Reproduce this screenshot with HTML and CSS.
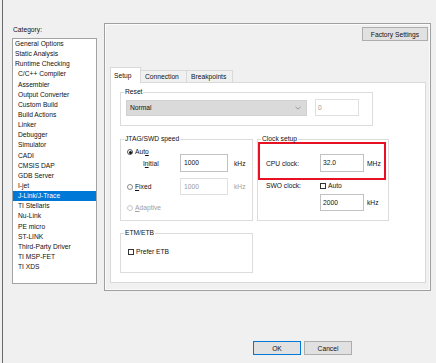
FILE: index.html
```html
<!DOCTYPE html>
<html lang="en">
<head>
    <meta charset="UTF-8">
    <title>Options for node</title>
    <link rel="stylesheet" href="styles.css">
</head>
<body>
    <div class="window">
        <aside class="sidebar">
            <div class="caption">Category:</div>
            <ul class="category-list">
                <li>General Options</li>
                <li>Static Analysis</li>
                <li>Runtime Checking</li>
                <li class="sub">C/C++ Compiler</li>
                <li class="sub">Assembler</li>
                <li class="sub">Output Converter</li>
                <li class="sub">Custom Build</li>
                <li class="sub">Build Actions</li>
                <li class="sub">Linker</li>
                <li class="sub">Debugger</li>
                <li class="sub">Simulator</li>
                <li class="sub">CADI</li>
                <li class="sub">CMSIS DAP</li>
                <li class="sub">GDB Server</li>
                <li class="sub">I-jet</li>
                <li class="sub selected">J-Link/J-Trace</li>
                <li class="sub">TI Stellaris</li>
                <li class="sub">Nu-Link</li>
                <li class="sub">PE micro</li>
                <li class="sub">ST-LINK</li>
                <li class="sub">Third-Party Driver</li>
                <li class="sub">TI MSP-FET</li>
                <li class="sub">TI XDS</li>
            </ul>
        </aside>

        <main class="options">
            <section class="panel">
                <div class="panel-top">
                    <button class="btn factory">Factory Settings</button>
                </div>
                <div class="tabs">
                    <span class="tab active">Setup</span>
                    <span class="tab tab-connection">Connection</span>
                    <span class="tab tab-breakpoints">Breakpoints</span>
                </div>
                <div class="tab-page">
                    <fieldset class="group reset-group">
                        <legend>Reset</legend>
                        <div class="reset-row">
                            <div class="combo">
                                <span>Normal</span>
                                <svg width="6" height="4" viewBox="0 0 6 4"><polyline points="0.5,0.8 3,3.2 5.5,0.8" fill="none" stroke="#8a8a8a" stroke-width="0.8"/></svg>
                            </div>
                            <div class="field disabled">0</div>
                        </div>
                    </fieldset>

                    <div class="groups">
                        <fieldset class="group jtag-group">
                            <legend>JTAG/SWD speed</legend>
                            <div class="group-body jtag-body">
                                <div class="opt auto-row"><span class="radio checked"></span><span>Aut<u>o</u></span></div>
                                <div class="speed-row">
                                    <span class="indent">I<u>n</u>itial</span>
                                    <div class="field">1000</div>
                                    <span>kHz</span>
                                </div>
                                <div class="speed-row fixed-row">
                                    <span class="opt"><span class="radio"></span><span><u>F</u>ixed</span></span>
                                    <div class="field disabled">1000</div>
                                    <span class="muted">kHz</span>
                                </div>
                                <div class="opt adaptive-row muted"><span class="radio faded"></span><span><u>A</u>daptive</span></div>
                            </div>
                        </fieldset>

                        <fieldset class="group clock-group">
                            <legend>Clock setup</legend>
                            <div class="highlight">
                                <div class="clock-row">
                                    <span>CPU clock:</span>
                                    <div class="field">32.0</div>
                                    <span>MHz</span>
                                </div>
                            </div>
                            <div class="clock-row swo-row">
                                <span>SWO clock:</span>
                                <span class="opt"><span class="check"></span><span>Auto</span></span>
                            </div>
                            <div class="clock-row swo-value">
                                <span></span>
                                <div class="field">2000</div>
                                <span>kHz</span>
                            </div>
                        </fieldset>

                        <fieldset class="group etm-group">
                            <legend>ETM/ETB</legend>
                            <div class="group-body etm-body">
                                <div class="opt"><span class="check"></span><span>Prefer ETB</span></div>
                            </div>
                        </fieldset>
                    </div>
                </div>
            </section>

            <div class="actions">
                <button class="btn default">OK</button>
                <button class="btn">Cancel</button>
            </div>
        </main>
    </div>
</body>
</html>
```

FILE: styles.css
```css
* {
    box-sizing: border-box;
}
body {
    margin: 0;
    width: 436px;
    height: 363px;
    overflow: hidden;
    background: #f0f0f0;
    font-family: "Liberation Sans", Arial, sans-serif;
    font-size: 6.7px;
    color: #111;
}
.window {
    display: grid;
    grid-template-columns: 85px 327px;
    column-gap: 7px;
    height: 363px;
    margin-left: 2px;
    border-left: 1px solid #6a6a6a;
    padding-left: 9px;
}

/* category list */
.sidebar {
    padding-top: 26px;
}
.caption {
    line-height: 8px;
    margin-bottom: 4px;
    padding-left: 1px;
}
.category-list {
    list-style: none;
    margin: 0;
    padding: 0;
    height: 246px;
    border: 1px solid #a3a3a3;
    background: #fff;
}
.category-list li {
    height: 10.15px;
    line-height: 10.15px;
    padding-left: 2px;
    white-space: nowrap;
}
.category-list .sub {
    padding-left: 5px;
}
.category-list .selected {
    background: #0078d7;
    color: #fff;
}

/* right side */
.panel {
    margin-top: 23px;
    height: 268px;
    border: 1px solid #a0a0a0;
    box-shadow: inset 0 0 0 1px #fbfbfb;
    padding: 3px 2px 0 5px;
}
.panel-top {
    display: flex;
    justify-content: flex-end;
}
.btn {
    height: 14px;
    padding: 0;
    border: 1px solid #adadad;
    background: #e1e1e1;
    font-family: inherit;
    font-size: 6.7px;
    color: #111;
}
.btn.factory {
    width: 66px;
}
.btn.default {
    border-color: #0078d7;
}
.tabs {
    display: flex;
    align-items: flex-end;
    height: 15px;
    margin-top: 26px;
}
.tab {
    height: 12px;
    line-height: 11px;
    padding-left: 4px;
    border: 1px solid #d9d9d9;
    border-bottom: none;
    background: #f0f0f0;
    white-space: nowrap;
}
.tab.active {
    position: relative;
    width: 31px;
    height: 16px;
    line-height: 15px;
    padding-left: 3px;
    margin-bottom: -1px;
    background: #fff;
}
.tab-connection {
    width: 46px;
    border-left: none;
}
.tab-breakpoints {
    width: 46px;
    border-left: none;
}
.tab-page {
    height: 201px;
    margin-right: 2px;
    border: 1px solid #d9d9d9;
    background: #fff;
    padding: 5px 0 0 9px;
}

/* group boxes */
.group {
    margin: 0;
    padding: 0;
    min-width: 0;
    border: 1px solid #dcdcdc;
}
.group legend {
    margin-left: 3px;
    padding: 0 1px;
    line-height: 8px;
}
.reset-group {
    width: 253px;
}
.reset-row {
    display: flex;
    align-items: center;
    gap: 8px;
    padding: 3px 0 9px 5px;
}
.combo {
    display: flex;
    align-items: center;
    justify-content: space-between;
    width: 181px;
    height: 16px;
    padding: 0 5px 0 3px;
    background: #dadada;
    border: 1px solid #d0d0d0;
}
.field {
    width: 44px;
    height: 17px;
    line-height: 15px;
    padding-left: 2px;
    border: 1px solid #c2c2c2;
    background: #fff;
}
.field.disabled {
    border-color: #e0e0e0;
    color: #9a9a9a;
}
.groups {
    display: grid;
    grid-template-columns: 133px 132px;
    column-gap: 4px;
    row-gap: 8px;
    margin-top: 9px;
}
.jtag-body {
    padding: 5px 0 8px 6px;
}
.opt {
    display: flex;
    align-items: center;
    gap: 2px;
    line-height: 8px;
}
.auto-row {
    margin-bottom: -2px;
}
.radio {
    display: inline-flex;
    align-items: center;
    justify-content: center;
    width: 6px;
    height: 6px;
    border: 1px solid #8a8a8a;
    border-radius: 50%;
}
.radio.checked {
    border-color: #555;
}
.radio.checked::after {
    content: "";
    width: 3px;
    height: 3px;
    border-radius: 50%;
    background: #111;
}
.radio.faded {
    border-color: #c8c8c8;
}
.check {
    width: 6px;
    height: 6px;
    border: 1px solid #333;
}
.speed-row {
    display: grid;
    grid-template-columns: 47px 48px auto;
    column-gap: 6px;
    align-items: center;
    height: 18px;
}
.speed-row .field {
    width: 48px;
    height: 18px;
    line-height: 16px;
    padding-left: 3px;
}
.indent {
    padding-left: 16px;
}
.fixed-row {
    height: 17px;
    margin-top: 6px;
}
.fixed-row .field {
    height: 17px;
}
.adaptive-row {
    margin-top: 9px;
}
.muted {
    color: #a0a0a0;
}
.clock-group {
    padding: 0;
}
.highlight {
    margin-top: -1px;
    width: 128px;
    border: 2px solid #e81123;
    padding: 10px 0 6px 6px;
}
.clock-row {
    display: grid;
    grid-template-columns: 51px 44px auto;
    column-gap: 3px;
    align-items: center;
}
.clock-row .field {
    height: 18px;
    line-height: 16px;
}
.swo-row {
    margin-top: 2px;
    padding-left: 8px;
    line-height: 8px;
}
.swo-value {
    margin-top: 4px;
    padding-left: 8px;
}
.swo-value .field {
    height: 17px;
}
.etm-body {
    padding: 11px 0 16px 7px;
}

.actions {
    display: flex;
    gap: 3px;
    margin-top: 50px;
    padding-left: 149px;
}
.actions .btn {
    width: 48px;
}
```
